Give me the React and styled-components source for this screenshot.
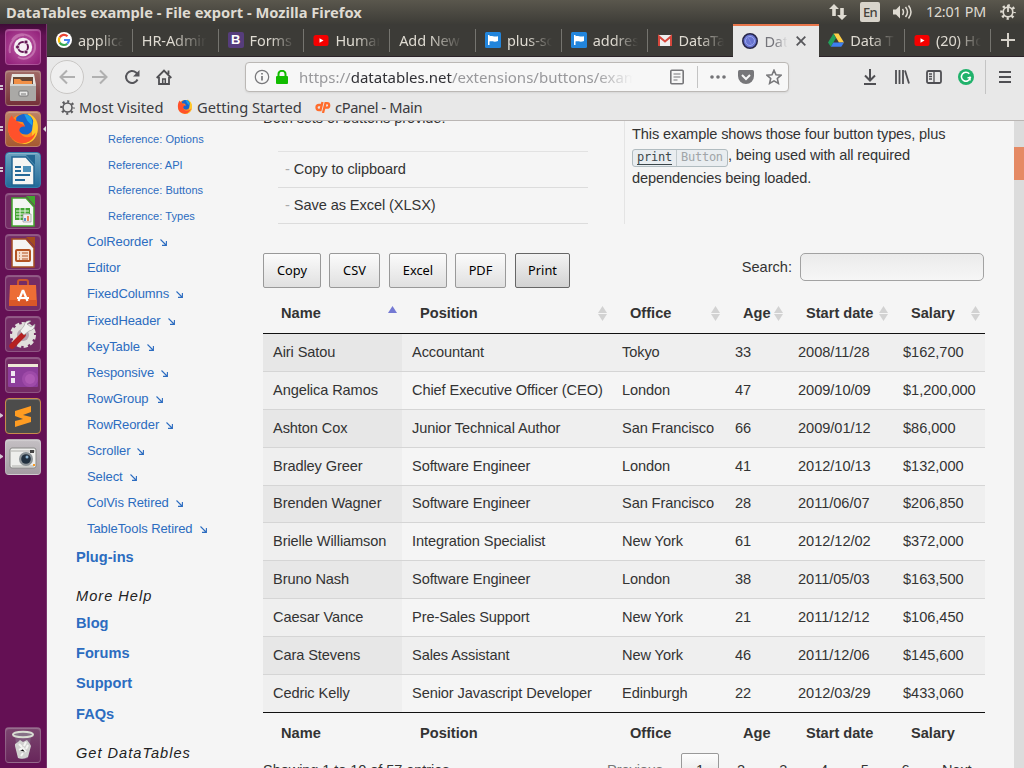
import React from "react";
import styled, { createGlobalStyle } from "styled-components";

const Global = createGlobalStyle`
  * { box-sizing: border-box; }
  body { margin: 0; overflow: hidden; background: #f5f5f5; }
  svg { display: block; flex: none; }
`;
const ui = `"Noto Sans", "Open Sans", sans-serif`;
const helv = `"Liberation Sans", Arial, sans-serif`;

const Screen = styled.div`
  width: 1024px; height: 768px; overflow: hidden; display: flex; flex-direction: column;
  background: #f5f5f5; font-family: ${helv};
`;
const TitleBar = styled.header`
  height: 24px; flex: none; display: flex; align-items: center; padding: 0 8px 0 6px;
  background: linear-gradient(#5a574d, #3d3c37); color: #dfdbd2; font-family: ${ui};
`;
const WindowTitle = styled.div`
  flex: 1; font-weight: 700; font-size: 14.7px; line-height: 22px; padding-bottom: 1px; letter-spacing: 0; white-space: nowrap;
`;
const Tray = styled.div`display: flex; align-items: center;`;
const Lang = styled.div`
  width: 20px; height: 20px; margin: 0 13px 0 13px; border-radius: 2px; background: #d8d4cb; color: #45433d;
  font-size: 13px; line-height: 21px; text-align: center; letter-spacing: -0.7px; font-weight: 500;
`;
const Clock = styled.div`width: 61px; margin: 0 13px 0 13px; padding-bottom: 1px; font-size: 14.3px; letter-spacing: -0.25px; white-space: nowrap;`;
const Desktop = styled.div`display: flex; flex: 1; min-height: 0;`;

const Launcher = styled.nav`
  width: 47px; flex: none; display: flex; flex-direction: column; align-items: flex-start; gap: 5px;
  padding: 5px 0 5px 5px; background: linear-gradient(#3e0b36, #641054 12px, #641054); border-right: 1px solid #7b356e;
`;
const Tile = styled.div`
  width: 36px; height: 36px; flex: none; position: relative; border-radius: 4px;
  border: 1px solid ${p => p.$edge || "rgba(255,255,255,.2)"};
  background: ${p => p.$bg}; box-shadow: inset 0 1px 1px rgba(255,255,255,.25);
  margin-top: ${p => (p.$last ? "auto" : 0)};
  svg { width: 34px; height: 34px; }
`;
const Pip = styled.i`
  position: absolute; left: -6px; top: 14px; width: 3px; height: 5px;
  border-top: ${p => p.$double ? "2px solid #d3c5d0" : "2.5px solid transparent"};
  border-bottom: ${p => p.$double ? "2px solid #d3c5d0" : "2.5px solid transparent"};
  border-left: ${p => p.$double ? "0" : "3px solid #d3c5d0"};
`;
const ActivePip = styled.i`
  position: absolute; right: -6px; top: 14px; border: 3px solid transparent; border-right-color: #ddd; border-left: 0;
`;

const Browser = styled.main`flex: 1; min-width: 0; display: flex; flex-direction: column;`;
const TabStrip = styled.div`height: 33px; flex: none; display: flex; background: #3c3b37; border-bottom: 1px solid #2b2228;`;
const Tab = styled.div`
  width: 85.8px; height: ${p => (p.$active ? 33 : 32)}px; flex: none; display: flex; align-items: center; padding-left: ${p => (p.$active ? 9 : 9)}px;
  position: relative; font: 14.5px ${ui}; color: ${p => (p.$active ? "#74747a" : "#dfdbd2")};
  ${p => p.$active && `background: #e8e8e8; border-top: 2px solid #e9764b; padding-bottom: 1px;`}
  > svg { margin-right: 6px; }
  &::after {
    content: ""; position: absolute; right: 0; top: 5px; height: 23px; width: 1px;
    background: ${p => (p.$noLine ? "transparent" : "#75746f")};
  }
`;
const TabText = styled.span`
  width: ${p => p.$w}px; overflow: hidden; white-space: nowrap; letter-spacing: -0.1px;
  mask-image: linear-gradient(to right, #000 45%, transparent 98%);
`;
const TabClose = styled.div`margin-left: 8px;`;
const NewTab = styled.div`flex: 1; display: flex; align-items: center; justify-content: center; padding-left: 2px;`;

const NavBar = styled.div`height: 40px; flex: none; display: flex; align-items: center; background: #e8e8e8; padding-left: 3px; color: #55555a;`;
const BackButton = styled.div`
  width: 34px; height: 34px; flex: none; border: 1px solid #c9c7c5; border-radius: 50%; background: #efefef; display: grid; place-items: center;
`;
const NavIcon = styled.div`margin-left: ${p => p.$ml}px; flex: none;`;
const UrlBar = styled.div`
  width: 544px; height: 30px; flex: none; margin-left: 73px; display: flex; align-items: center; border: 1px solid #bbb8b5; border-radius: 4px;
  background: #f7f7f7; padding-left: 8px; box-shadow: 0 1px 2px rgba(0,0,0,.08);
`;
const Url = styled.div`
  width: 337px; margin-left: 11px; overflow: hidden; white-space: nowrap; font: 15px ${ui}; color: #98989b;
  mask-image: linear-gradient(to right, #000 88%, transparent 99%);
  b { font-weight: 400; color: #303035; }
`;
const Rule = styled.div`width: 1px; height: ${p => p.$h}px; margin-left: ${p => p.$ml}px; background: #c4c4c4; flex: none;`;
const Bookmarks = styled.div`
  height: 24px; flex: none; display: flex; align-items: center; background: #e8e8e8; border-bottom: 1px solid #bab6b4;
  padding: 0 0 3px 13px; font: 14.7px ${ui}; color: #3b3b3e; white-space: nowrap;
`;
const Bookmark = styled.div`width: ${p => p.$w}px; display: flex; align-items: center; gap: 4px; letter-spacing: ${p => p.$ls || 0}px;`;

const Page = styled.div`flex: 1; min-height: 0; overflow: hidden; display: flex; background: #f5f5f5; color: #333;`;
const SideNav = styled.aside`width: 216px; flex: none; padding: 5.3px 0 0 29px; color: #2c6cc0;`;
const Item = styled.div`
  height: ${p => [0, 30.2, 26.1, 25.6][p.$level]}px; padding-left: ${p => [0, 0, 11, 32][p.$level]}px;
  display: flex; align-items: center; white-space: nowrap;
  font-size: ${p => [0, 14.6, 13, 11.05][p.$level]}px; font-weight: ${p => (p.$level === 1 ? 700 : 400)};
  letter-spacing: ${p => [0, 0.02, -0.08, 0.03][p.$level]}px;
  svg { margin: 2px 0 0 7px; }
`;
const SideHeading = styled.div`
  height: 24px; margin-top: 12px; display: flex; align-items: center; font-style: italic; font-size: 14.6px; letter-spacing: 1px; color: #222;
`;
const Article = styled.section`width: 722px; flex: none; font-size: 14.6px; letter-spacing: -0.09px;`;
const Intro = styled.div`display: flex; height: 103px;`;
const IntroLeft = styled.div`width: 361px; margin-top: -14px;`;
const IntroText = styled.div`height: 44px; line-height: 22px;`;
const Features = styled.ul`
  list-style: none; margin: 0 36px 0 15px; padding: 0; border-top: 1px solid #e2e2e2;
  li { height: 36px; line-height: 34px; padding-left: 7px; border-bottom: 1px solid #dcdcdc; }
  li::before { content: "-"; color: #aaa; margin-right: 4px; }
`;
const IntroRight = styled.div`flex: 1; border-left: 1px solid #e4e4e4; padding: 2px 0 0 7px; letter-spacing: -0.13px; white-space: nowrap;`;
const Line = styled.div`height: ${p => p.$h}px; line-height: 22px;`;
const Code = styled.code`
  display: inline-flex; height: 18px; width: 96px; border: 1px solid #b1bcc0; border-radius: 3px; background: #e9edf0;
  font: 12px/15px "DejaVu Sans Mono", "Liberation Mono", monospace; letter-spacing: -0.25px; color: #a0a5a8; position: relative; top: 1px;
  u { width: 44px; padding-left: 4px; border-right: 1px solid #c2cacd; text-decoration: none; color: #3b4649; }
  u span { display: inline-block; height: 15px; border-bottom: 1px solid #3b4649; }
  em { font-style: normal; padding-left: 4px; }
`;
const Controls = styled.div`height: 69px; padding-top: 29px; display: flex; align-items: flex-start;`;
const Button = styled.button`
  width: ${p => p.$w}px; height: 35px; margin: 0 ${p => p.$mr}px 0 0; padding: 0 0 2px; border: 1px solid ${p => (p.$on ? "#666" : "#999")}; border-radius: 2px;
  background: ${p => (p.$on ? "linear-gradient(#f3f3f3, #d2d2d2)" : "linear-gradient(#fbfbfb, #e0e0e0)")};
  font: 12.8px ${ui}; color: #000; letter-spacing: 0;
`;
const Search = styled.label`margin-left: auto; display: flex; line-height: 28px; letter-spacing: 0;`;
const SearchField = styled.input`
  width: 184px; height: 28px; margin: 0 1px 0 8px; border: 1px solid #a2a2a2; border-radius: 5px; background: linear-gradient(#ebebeb, #f6f6f6);
`;
const Row = styled.div`
  display: grid; grid-template-columns: 139px 210px 113px 63px 105px 92px; height: ${p => p.$h}px;
  background: ${p => (p.$odd ? "#efefef" : "#f5f5f5")}; border-top: ${p => (p.$first ? 0 : 1)}px solid #d5d5d5;
`;
const Cell = styled.div`
  padding: 0 0 2px 10px; display: flex; align-items: center; white-space: nowrap;
  letter-spacing: ${p => (p.$numeric ? "-0.04px" : "-0.1px")};
  background: ${p => (p.$sorted ? (p.$odd ? "#e7e7e7" : "#efefef") : "transparent")};
`;
const Head = styled(Row)`
  border: 0; background: none; font-weight: 700; letter-spacing: 0;
  ${p => (p.$foot ? "border-top: 1px solid #111;" : "border-bottom: 1px solid #111;")}
`;
const HeadCell = styled.div`padding: 0 5px 0 18px; display: flex; align-items: center; justify-content: space-between; white-space: nowrap;`;
const Pager = styled.div`display: flex; height: 35px; line-height: 35px; white-space: nowrap;`;
const PageLink = styled.span`
  width: ${p => p.$w}px; text-align: ${p => p.$left ? "left" : "center"}; color: ${p => p.$muted ? "#777" : "#333"}; flex: none;
  ${p => p.$on && "border: 1px solid #999; border-radius: 2px; background: linear-gradient(#fdfdfd, #dcdcdc); line-height: 33px;"}
`;
const Info = styled.span`width: 344px; flex: none;`;
const ScrollBar = styled.div`width: 10px; margin-left: auto; padding-top: 26px; background: #dcdcdc;`;
const Thumb = styled.div`height: 33px; background: #e58a64;`;

const Svg = ({ s = 16, w = s, h = s, vb = "0 0 16 16", children, c = "#4f4f53", sw = 1.8 }) => (
  <svg width={w} height={h} viewBox={vb} fill="none" stroke={c} strokeWidth={sw}>{children}</svg>
);

const FirefoxArt = ({ s }) => (
  <svg width={s} height={s} viewBox="2 3 30 30">
    <circle cx="17" cy="18" r="13" fill="#ff8a1d" />
    <path d="M22 4c6 3 9 8 8 15-1 8-7 13-14 12 8-1 11-7 8-13L20 11z" fill="#ffc928" />
    <path d="M5 9c-3 8-1 17 6 20 8 4 16-1 17-8-4 6-11 5-13 1-2-4 2-5 5-5-2-4-7-3-8-6L9 9 7 6z" fill="#ff512b" />
    <path d="M11 8c5-6 14-3 15 3l-1 8c-2 5-9 5-11 1-1-3 2-5 5-4l-2-4-6-1z" fill="#1666cf" />
    <path d="M18 5c6 0 8 5 7 10l-4-4z" fill="#1da0e8" />
  </svg>
);
const TileArt = ({ k }) => {
  if (k === "firefox") return <FirefoxArt s={34} />;
  const doc = (c, d) => <><path d="M6 4h14l8 9v19H6z" fill="#f5f5f3" stroke={c} strokeWidth="1.5" /><path d="M20 2h9v10z" fill={c} />{d}</>;
  const art = {
    ubuntu: <><path d="M6 10C12 1 27 3 29 15c1 10-9 17-17 12M4 23C2 14 9 5 18 5" fill="none" stroke="#cf88bd" strokeWidth="2" opacity=".65" /><circle cx="17" cy="17" r="9.2" fill="#f6eff4" /><circle cx="17" cy="17" r="5" fill="none" stroke="#651855" strokeWidth="2" /><g fill="#651855" stroke="#f6eff4" strokeWidth=".7"><circle cx="11.5" cy="17" r="2" /><circle cx="20" cy="12" r="2" /><circle cx="20" cy="22" r="2" /></g></>,
    files: <><path d="M6 3h22l2 11H4z" fill="#e7e5df" /><path d="M7 6h20v8H7z" fill="#684735" /><path d="M8 8h6l2 2h10v4H8z" fill="#f19047" /><path d="M4 13h26v16q0 1-1 1H5q-1 0-1-1z" fill="#aaa9a6" /><path d="M4 13h26v2H4z" fill="#d2d2cf" /><rect x="13" y="20" width="9" height="5" rx="1" fill="#e9e9e7" stroke="#777" /><path d="M15 23h5" stroke="#777" /></>,
    writer: doc("#236692", <><path d="M9 14h6M9 18h6M9 22h15M9 27h10" stroke="#246897" strokeWidth="2" /><path d="M17 13h8v6h-8z" fill="#4d91b9" /></>),
    calc: doc("#43a52f", <><rect x="9" y="14" width="15" height="12" fill="#45a634" /><path d="M10 17h13M10 20h13M10 23h13M14 14v12M19 14v12" stroke="#e9f4e5" strokeWidth="1" /><path d="M17 20h8v8h-8z" fill="#eee" stroke="#888" strokeWidth=".6" /><path d="M19 24v3" stroke="#347cc6" strokeWidth="1.6" /><path d="M22 22v5" stroke="#e76a32" strokeWidth="1.6" /></>),
    impress: doc("#a44c20", <><rect x="10" y="15" width="14" height="11" rx="1" fill="#f7dfcd" stroke="#b35423" strokeWidth="2" /><path d="M13 18h1M16 18h6M13 21h1M16 21h6M13 24h1M16 24h6" stroke="#b35423" /></>),
    software: <><path d="M12 11V6q0-2 2-2h6q2 0 2 2v5" fill="none" stroke="#c9552f" strokeWidth="2" /><path d="M4 9h26l1 21H3z" fill="#ec6d35" /><path d="M3 24h28v6H3z" fill="#d95728" /><path d="M17 14l-4.500 11M17 14l4.500 11M11 22h12" fill="none" stroke="#fff" strokeWidth="2.200" /></>,
    settings: <><circle cx="17" cy="18" r="11" fill="#e1dfdc" stroke="#e1dfdc" strokeWidth="4" strokeDasharray="4 2.280" /><circle cx="17" cy="18" r="6" fill="#b5a3b0" /><path d="M17 18L6 29" stroke="#b52122" strokeWidth="5.500" strokeLinecap="round" /><path d="M25 4q-6-1-7 5l-4 5 4 4 5-4q6-1 6-7l-4 3-4-3z" fill="#f1f1ef" stroke="#999" strokeWidth=".6" /></>,
    window: <><rect x="2" y="6" width="30" height="23" rx="1" fill="#8d3d9b" /><circle cx="24" cy="21" r="8" fill="#c66ac6" opacity=".3" /><circle cx="24" cy="21" r="5" fill="#d47bd0" opacity=".3" /><path d="M2 6h30v3H2z" fill="#eee9d7" /><path d="M5 13h4v5H5zM5 20h4v5H5z" fill="#efe8f1" /></>,
    sublime: <><rect x="1" y="1" width="32" height="32" rx="2" fill="#4c4c4b" /><path d="M9 12l16-5v6l-8 3 8 2v5L9 28v-6l8-2-8-3z" fill="#ff9c22" /></>,
    camera: <><rect x="4" y="8" width="26" height="20" rx="2" fill="#eeeeec" stroke="#898987" /><path d="M5 11h24M6 26h22" stroke="#cfcfcc" strokeWidth="2" /><circle cx="20" cy="19" r="7" fill="#8b9296" /><circle cx="20" cy="19" r="4.800" fill="#22313f" /><circle cx="21" cy="17" r="1.500" fill="#90b5d1" /><rect x="24" y="10" width="4" height="3" fill="#444" /><rect x="27" y="24" width="2" height="2" fill="#f89b27" /></>,
    trash: <><path d="M9 8l3 22q5 2 10 0l3-22z" fill="#7e587b" /><path d="M9 16l3-2 2-2 3 2 4-2 3 4 1 2-3 11q-5 3-10 1L9 18z" fill="#d1d1cf" /><path d="M13 16l3 3M20 14l-2 4M13 22l4-2 3 4M22 17l-2 4M15 28l2-3" stroke="#f5f5f3" strokeWidth="2" /><ellipse cx="17" cy="6.500" rx="10" ry="2.800" fill="#867187" stroke="#d9ddd3" strokeWidth="2" /></>,
  };
  return <svg viewBox="0 0 34 34">{art[k]}</svg>;
};
const tiles = [
  ["ubuntu", "radial-gradient(#c15ca8,#8e1c76)", 0], ["files", "linear-gradient(#a06a65,#75313a)", 2],
  ["firefox", "linear-gradient(#bd8265,#a65a31)", 2, "#ba806c"], ["writer", "linear-gradient(#69a0be,#226b9a)", 2, "#347daa"],
  ["calc", "#742c65"], ["impress", "#742c65"], ["software", "#742c65"], ["settings", "#742c65"], ["window", "#742c65"],
  ["sublime", "#4c4c4b", 1, "#c88b4b"], ["camera", "linear-gradient(#c4bfc3,#a49da3)", 1], ["trash", "linear-gradient(#7b466f,#68265b)"],
];

const Fav = ({ k }) => {
  const a = {
    google: <><circle cx="8" cy="8" r="8" fill="#fff" /><g fill="none" strokeWidth="2.2"><path d="M11.5 4.2A5 5 0 0 0 3.700 5.400" stroke="#ea4335" /><path d="M3.700 5.400A5 5 0 0 0 3.700 10.600" stroke="#fbbc05" /><path d="M3.700 10.600A5 5 0 0 0 11.300 11.700" stroke="#34a853" /><path d="M11.300 11.700A5 5 0 0 0 13 8H8" stroke="#4285f4" /></g></>,
    flag: <><rect width="16" height="16" rx="1.5" fill="#2285dc" /><path d="M3 3v10h1.500V9.600c2-1.200 4 1 8.500-.5V4.200C9 5.500 7 3.200 4.500 4.300V3z" fill="#fff" /></>,
    youtube: <><rect x=".5" y="3" width="15" height="11" rx="2.500" fill="#f50000" /><path d="M6.500 6.200v4.600L10.500 8.500z" fill="#fff" /></>,
    gmail: <><rect x="1" y="3" width="14" height="11" fill="#eee" /><path d="M2 14V4.500L8 9.500l6-5V14" fill="none" stroke="#d6473c" strokeWidth="2" /></>,
    data: <><circle cx="8" cy="8" r="7.2" fill="#6873d0" stroke="#28284b" strokeWidth="1.600" /><circle cx="8" cy="8" r="4.500" fill="none" stroke="#9ca9ec" /><path d="M4 4c3 0 4 5 6 8" stroke="#858fe0" fill="none" /></>,
    drive: <><path d="M5.500 1.500h5L16 10.500h-5z" fill="#ffcf48" /><path d="M5.500 1.500L8 6 2.800 14.800 0 10.500z" fill="#22a15b" /><path d="M5.300 10.500H16l-2.700 4.300H2.800z" fill="#3d7ff0" /></>,
  };
  return <svg width="16" height="16" viewBox="0 0 16 16">{a[k]}</svg>;
};
const BootstrapMark = styled.i`
  width: 16px; height: 16px; margin-right: 6px; border-radius: 2px; background: #563d7c; color: #fff; font: 700 13px/16px ${helv}; text-align: center; flex: none;
`;
const tabs = [["google", "applica"], [null, "HR-Admin"], ["boot", "Forms"], ["youtube", "Human"], [null, "Add New F"], ["flag", "plus-sc"], ["flag", "addres"], ["gmail", "DataTa"], ["data", "Dat"], ["drive", "Data T"], ["youtube", "(20) Ho"]];

const people = [
  ["Airi Satou", "Accountant", "Tokyo", "33", "2008/11/28", "$162,700"],
  ["Angelica Ramos", "Chief Executive Officer (CEO)", "London", "47", "2009/10/09", "$1,200,000"],
  ["Ashton Cox", "Junior Technical Author", "San Francisco", "66", "2009/01/12", "$86,000"],
  ["Bradley Greer", "Software Engineer", "London", "41", "2012/10/13", "$132,000"],
  ["Brenden Wagner", "Software Engineer", "San Francisco", "28", "2011/06/07", "$206,850"],
  ["Brielle Williamson", "Integration Specialist", "New York", "61", "2012/12/02", "$372,000"],
  ["Bruno Nash", "Software Engineer", "London", "38", "2011/05/03", "$163,500"],
  ["Caesar Vance", "Pre-Sales Support", "New York", "21", "2011/12/12", "$106,450"],
  ["Cara Stevens", "Sales Assistant", "New York", "46", "2011/12/06", "$145,600"],
  ["Cedric Kelly", "Senior Javascript Developer", "Edinburgh", "22", "2012/03/29", "$433,060"],
];
const rowHeights = [37, 38, 38, 38, 37, 38, 38, 38, 38, 38];
const columns = ["Name", "Position", "Office", "Age", "Start date", "Salary"];
const refs = ["Reference: Options", "Reference: API", "Reference: Buttons", "Reference: Types"];
const exts = ["ColReorder", "Editor", "FixedColumns", "FixedHeader", "KeyTable", "Responsive", "RowGroup", "RowReorder", "Scroller", "Select", "ColVis Retired", "TableTools Retired"];

const Sort = ({ asc }) => (
  <svg width="9" height="15" viewBox="0 0 9 15">
    <path d="M4.500 0L9 7H0z" fill={asc ? "#7479d3" : "#d2d2d2"} />
    {!asc && <path d="M4.500 15L0 8h9z" fill="#d2d2d2" />}
  </svg>
);
const Gear = ({ s, c, power }) => (
  <svg width={s} height={s} viewBox="0 0 16 16" fill="none" stroke={c}>
    <circle cx="8" cy="8" r="6.500" strokeWidth="2.600" strokeDasharray="2.200 2.905" strokeDashoffset="1.100" />
    <circle cx="8" cy="8" r="4.800" strokeWidth="1.700" />
    {power && <path d="M8 1v7" strokeWidth="1.800" />}
  </svg>
);

export default function App() {
  return (
    <Screen>
      <Global />
      <TitleBar>
        <WindowTitle>DataTables example - File export - Mozilla Firefox</WindowTitle>
        <Tray>
          <svg width="18" height="16" viewBox="0 0 18 16" fill="#dfdbd2"><path d="M5 0l5 5H6.800v7H3.200V5H0zM13 16l-5-5h3.200V4h3.600v7H18z" /></svg>
          <Lang>En</Lang>
          <Svg w={20} h={16} vb="0 0 20 16" c="#dfdbd2" sw={1.500}><path d="M0 5.500h3l4-4v13l-4-4H0z" fill="#dfdbd2" stroke="none" /><path d="M9.500 5q2 3 0 6M12.500 3q4 5 0 10M15.500 1.500q5 6.500 0 13" /></Svg>
          <Clock>12:01 PM</Clock>
          <Gear s={16} c="#dfdbd2" power />
        </Tray>
      </TitleBar>
      <Desktop>
        <Launcher>
          {tiles.map(([k, bg, pip, edge]) => (
            <Tile key={k} $bg={bg} $edge={edge} $last={k === "trash"}>
              {pip ? <Pip $double={pip === 2} /> : null}
              <TileArt k={k} />
              {k === "firefox" && <ActivePip />}
            </Tile>
          ))}
        </Launcher>
        <Browser>
          <TabStrip>
            {tabs.map(([k, t], i) => (
              <Tab key={i} $active={i === 8} $noLine={i === 7 || i === 8}>
                {k === "boot" ? <BootstrapMark>B</BootstrapMark> : k ? <Fav k={k} /> : null}
                <TabText $w={i === 8 ? 24 : k ? 46 : 66}>{t}</TabText>
                {i === 8 && <TabClose><Svg s={10} vb="0 0 10 10" c="#57575b"><path d="M.7.7l8.600 8.600M9.300.7L.7 9.300" /></Svg></TabClose>}
              </Tab>
            ))}
            <NewTab><Svg s={14} vb="0 0 14 14" c="#d5d1c9" sw={2}><path d="M7 0v14M0 7h14" /></Svg></NewTab>
          </TabStrip>
          <NavBar>
            <BackButton><Svg c="#b0b0b0" sw={2}><path d="M16 8H2M8 1.500L1.500 8 8 14.500" /></Svg></BackButton>
            <NavIcon $ml={8}><Svg c="#b0b0b0" sw={2}><path d="M0 8h14M8 1.500L14.500 8 8 14.500" /></Svg></NavIcon>
            <NavIcon $ml={16}><Svg c="#55555a" sw={2}><path d="M13.500 10.500A6 6 0 1 1 12 3.500L14 6" /><path d="M15.500 1v6.500H9z" fill="#55555a" stroke="none" /></Svg></NavIcon>
            <NavIcon $ml={16}><Svg><path d="M.7 9L8 1.500 15.300 9M3 8v7h10V8M12.500 5V1.500" /><path d="M6.700 15v-5h2.600v5" strokeWidth="1.500" /></Svg></NavIcon>
            <UrlBar>
              <Svg c="#77777a" sw={1.2}><circle cx="8" cy="8" r="6.700" /><path d="M8 7v4.500M8 4v1.600" strokeWidth="1.700" /></Svg>
              <NavIcon $ml={6}><svg width="12" height="14" viewBox="0 0 12 14"><rect y="6" width="12" height="8" rx="1" fill="#12bc00" /><path d="M2.500 7V4a3.500 3.200 0 0 1 7 0v3" fill="none" stroke="#12bc00" strokeWidth="2" /></svg></NavIcon>
              <Url>https://<b>datatables.net</b>/extensions/buttons/examp</Url>
              <NavIcon $ml={33}><Svg c="#77777a" sw={1.6}><rect x="1.800" y="1.300" width="12.400" height="13.400" rx="1" /><path d="M4.500 5h7M4.500 8h7M4.500 11h4" strokeWidth="1.200" /></Svg></NavIcon>
              <Rule $h={22} $ml={12} />
              <NavIcon $ml={12}><svg width="16" height="16" viewBox="0 0 16 16" fill="#737376"><circle cx="2" cy="8" r="1.800" /><circle cx="8" cy="8" r="1.800" /><circle cx="14" cy="8" r="1.800" /></svg></NavIcon>
              <NavIcon $ml={12}><svg width="16" height="16" viewBox="0 0 16 16"><path d="M1.500 1h13Q16 1 16 2.500V7A8 8 0 0 1 0 7V2.500Q0 1 1.500 1z" fill="#77777a" /><path d="M4 6l4 4 4-4" fill="none" stroke="#f7f7f7" strokeWidth="2" /></svg></NavIcon>
              <NavIcon $ml={12}><Svg c="#77777a" sw={1.6}><path d="M8 1.200l2 4.500 5 .5-3.700 3.300 1.100 4.900L8 11.900l-4.400 2.500 1.100-4.900L1 6.200l5-.5z" /></Svg></NavIcon>
            </UrlBar>
            <NavIcon $ml={73}><Svg sw={2}><path d="M8 0v11M3 6.500L8 11.500l5-5M2 15h12" /></Svg></NavIcon>
            <NavIcon $ml={16}><Svg sw={2}><path d="M2 1v14M5.500 1v14M9 1v14M11 1.500l4 13" strokeWidth="1.800" /></Svg></NavIcon>
            <NavIcon $ml={16}><Svg><rect x="1" y="2" width="14" height="12" rx="1.500" /><path d="M8 2v12M3 5h3M3 7.500h3M3 10h3" strokeWidth="1.300" /></Svg></NavIcon>
            <NavIcon $ml={16}><svg width="16" height="16" viewBox="0 0 16 16"><circle cx="8" cy="8" r="8" fill="#20b26b" /><path d="M11.300 4.700A4.500 4.500 0 1 0 12.300 8.800H9.500M12 7.500V11.500" fill="none" stroke="#fff" strokeWidth="1.500" /></svg></NavIcon>
            <Rule $h={34} $ml={11} />
            <NavIcon $ml={13}><Svg w={12} h={12} vb="0 0 12 12" sw={2}><path d="M0 1h12M0 6h12M0 11h12" /></Svg></NavIcon>
          </NavBar>
          <Bookmarks>
            <Bookmark $w={117} $ls={0}><Gear s={15} c="#5a5a5d" />Most Visited</Bookmark>
            <Bookmark $w={138} $ls={-0.05}><FirefoxArt s={16} />Getting Started</Bookmark>
            <Bookmark $w={120} $ls={-0.38}>
              <svg width="16" height="12" viewBox="0 0 16 12" fill="none" stroke="#ff6c2c" strokeWidth="2.300"><path d="M6.500 4H4a2.500 2.500 0 0 0 0 5h1.500L7.500 1M8 12L10.500 2.200H12a2.200 2.200 0 0 1 0 4.400H9.800" /></svg>
              cPanel - Main
            </Bookmark>
          </Bookmarks>
          <Page>
            <SideNav>
              {refs.map(r => <Item key={r} $level={3}>{r}</Item>)}
              {exts.map(x => (
                <Item key={x} $level={2}>{x}
                  {x !== "Editor" && <Svg s={7} vb="0 0 7 7" c="#2c6cc0" sw={1.1}><path d="M.5.5l5.500 5.500M6.400 2v4.400H2" /></Svg>}
                </Item>
              ))}
              <Item $level={1}>Plug-ins</Item>
              <SideHeading>More Help</SideHeading>
              {["Blog", "Forums", "Support", "FAQs"].map(x => <Item key={x} $level={1}>{x}</Item>)}
              <SideHeading>Get DataTables</SideHeading>
            </SideNav>
            <Article>
              <Intro>
                <IntroLeft>
                  <IntroText>Both sets of buttons provide:</IntroText>
                  <Features><li>Copy to clipboard</li><li>Save as Excel (XLSX)</li></Features>
                </IntroLeft>
                <IntroRight>
                  <Line $h={21}>This example shows those four button types, plus</Line>
                  <Line $h={23}><Code><u><span>print</span></u><em>Button</em></Code>, being used with all required</Line>
                  <Line $h={22}>dependencies being loaded.</Line>
                </IntroRight>
              </Intro>
              <Controls>
                <Button $w={58} $mr={8}>Copy</Button><Button $w={51} $mr={9}>CSV</Button><Button $w={58} $mr={8}>Excel</Button>
                <Button $w={51} $mr={9}>PDF</Button><Button $w={55} $mr={0} $on>Print</Button>
                <Search>Search:<SearchField /></Search>
              </Controls>
              <Head $h={41}>{columns.map((c, i) => <HeadCell key={c}>{c}<Sort asc={i === 0} /></HeadCell>)}</Head>
              {people.map((p, r) => (
                <Row key={r} $h={rowHeights[r]} $odd={r % 2 === 0} $first={r === 0}>
                  {p.map((v, i) => <Cell key={i} $sorted={i === 0} $odd={r % 2 === 0} $numeric={i > 2}>{v}</Cell>)}
                </Row>
              ))}
              <Head $h={41} $foot>{columns.map(c => <HeadCell key={c}>{c}</HeadCell>)}</Head>
              <Pager>
                <Info>Showing 1 to 10 of 57 entries</Info>
                <PageLink $w={74} $muted $left>Previous</PageLink>
                <PageLink $w={38} $on>1</PageLink>
                {["2", "3", "4", "5", "6"].map((n, i) => <PageLink key={n} $w={i ? 40.7 : 44}>{n}</PageLink>)}
                <PageLink $w={62}>Next</PageLink>
              </Pager>
            </Article>
            <ScrollBar><Thumb /></ScrollBar>
          </Page>
        </Browser>
      </Desktop>
    </Screen>
  );
}
